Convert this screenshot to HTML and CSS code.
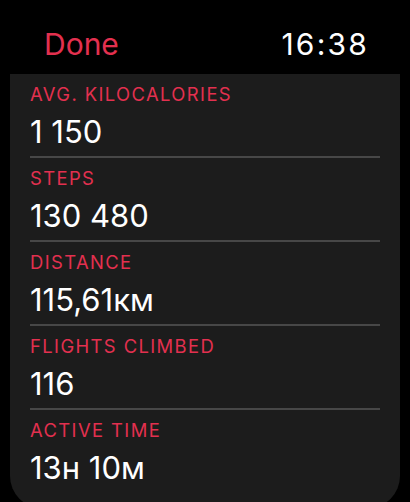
FILE: index.html
```html
<!DOCTYPE html>
<html lang="en">
<head>
  <meta charset="UTF-8">
  <meta name="viewport" content="width=device-width, initial-scale=1.0">
  <title>Summary</title>
  <link rel="stylesheet" href="styles.css">
</head>
<body>
  <div class="topbar">
    <span class="done">Done</span>
    <span class="clock">16:38</span>
  </div>
  <div class="card">
    <div class="row">
      <div class="label">AVG. KILOCALORIES</div>
      <div class="value">1 150</div>
    </div>
    <div class="row">
      <div class="label">STEPS</div>
      <div class="value">130 480</div>
    </div>
    <div class="row">
      <div class="label">DISTANCE</div>
      <div class="value">115,61км</div>
    </div>
    <div class="row">
      <div class="label">FLIGHTS CLIMBED</div>
      <div class="value">116</div>
    </div>
    <div class="row">
      <div class="label">ACTIVE TIME</div>
      <div class="value">13н 10м</div>
    </div>
  </div>
</body>
</html>
```

FILE: styles.css
```css
body {
  margin: 0;
  background: #000;
  font-family: Inter, "Noto Sans", sans-serif;
  color: #fff;
  height: 502px;
  overflow: hidden;
}
.topbar {
  display: flex;
  justify-content: space-between;
  padding: 26px 41px 0 44px;
  height: 36px;
  font-size: 30px;
  line-height: 36px;
  margin-bottom: 12px;
}
.done {
  color: #e3304f;
}
.clock {
  color: #fff;
  letter-spacing: 2.2px;
}
.card {
  margin: 0 10px;
  background: #1c1c1c;
  border-radius: 0 0 32px 32px;
  padding: 0 20px 16px 20px;
}
.row {
  padding: 9px 0 6px 0;
  border-bottom: 2px solid #474747;
}
.row:last-child {
  border-bottom: none;
}
.label {
  color: #e3304f;
  font-size: 18.4px;
  line-height: 22px;
  letter-spacing: 1.4px;
  margin-bottom: 9px;
}
.value {
  font-size: 31px;
  line-height: 36px;
}
```
